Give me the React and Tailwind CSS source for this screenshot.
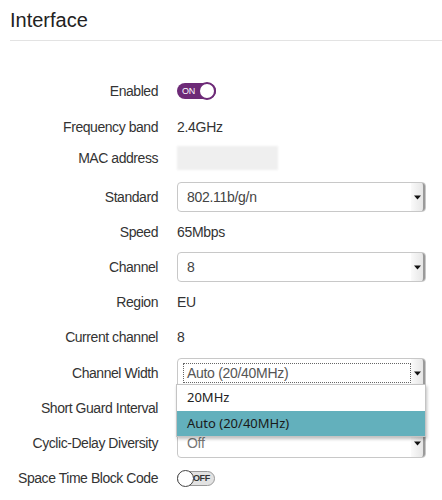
import React from "react";

const Arrow = () => (
  <div className="absolute right-0 top-0 bottom-0 w-[14px] flex items-center justify-center bg-gradient-to-r from-[#fafafa] to-[#e6e6e6] border-r-2 border-[#9a9a9a] rounded-r-[3px]">
    <svg width="7" height="5" viewBox="0 0 7 5"><path d="M0 0.5 L7 0.5 L3.5 4.5 Z" fill="#111" /></svg>
  </div>
);

const Select = ({ value, focus, muted }) => (
  <div className="relative w-[249px] h-[30px] border border-[#c8c8c8] rounded-[4px] bg-white flex items-center">
    {focus ? (
      <div className="ml-[5px] w-[228px] h-[20px] border border-dotted border-[#666] flex items-center pl-[3px] text-[14px] text-[#555]">
        {value}
      </div>
    ) : (
      <span className={`pl-[9px] text-[14px] ${muted ? "text-[#777]" : "text-[#444]"}`}>{value}</span>
    )}
    <Arrow />
  </div>
);

const ToggleOn = () => (
  <div className="relative w-[39px] h-[16px] rounded-full bg-[#6d2a77] flex items-center">
    <span className="pl-[5px] text-[9px] leading-none text-white">ON</span>
    <div className="absolute right-0 top-[-1px] w-[18px] h-[18px] rounded-full bg-white border-2 border-[#6d2a77]" />
  </div>
);

const ToggleOff = () => (
  <div className="relative w-[38px] h-[15px] rounded-full bg-[#e2e2e2] border border-[#999] flex items-center justify-end">
    <span className="pr-[4px] text-[9px] leading-none text-[#333] font-bold">OFF</span>
    <div className="absolute left-[-1px] top-[-2px] w-[17px] h-[17px] rounded-full bg-white border border-[#444]" />
  </div>
);

const Row = ({ label, children, mt }) => (
  <div className={`flex items-center h-[30px] ${mt}`}>
    <div className="w-[158px] text-right text-[14px] text-[#333] shrink-0 tracking-[-0.45px]">{label}</div>
    <div className="ml-[19px] text-[14px] text-[#333] flex items-center tracking-[-0.3px]">{children}</div>
  </div>
);

export default function App() {
  return (
    <div className="w-[442px] h-[500px] bg-white overflow-hidden relative" style={{ fontFamily: '"Liberation Sans", Arial, sans-serif' }}>
      <div className="pl-[10px]">
        <div className="pt-[8px] h-[40px] text-[20px] text-[#222] leading-[24px]">Interface</div>
        <div className="h-px bg-[#e3e3e3]" />
      </div>
      <div className="flex flex-col">
        <Row label="Enabled" mt="mt-[35px]"><ToggleOn /></Row>
        <Row label="Frequency band" mt="mt-[6px]">2.4GHz</Row>
        <Row label="MAC address" mt="mt-[1px]">
          <div className="w-[101px] h-[24px] bg-[#efefef] blur-[1px]" />
        </Row>
        <Row label="Standard" mt="mt-[9px]"><Select value="802.11b/g/n" /></Row>
        <Row label="Speed" mt="mt-[5px]">65Mbps</Row>
        <Row label="Channel" mt="mt-[5px]"><Select value="8" /></Row>
        <Row label="Region" mt="mt-[5px]">EU</Row>
        <Row label="Current channel" mt="mt-[5px]">8</Row>
        <Row label="Channel Width" mt="mt-[6px]">
          <div className="relative">
            <Select value="Auto (20/40MHz)" focus />
            <div className="absolute left-[-1px] top-[26px] w-[250px] bg-white border border-[#c4c4c4] shadow-[1px_2px_3px_rgba(0,0,0,0.25)] z-10 tracking-normal" style={{ fontFamily: '"Noto Sans", "Open Sans", sans-serif' }}>
              <div className="h-[26px] flex items-center pl-[10px] text-[13px] text-[#222]">20MHz</div>
              <div className="h-[25px] flex items-center pl-[10px] text-[13px] text-[#1a1a1a] bg-[#63b0bc]">Auto (20/40MHz)</div>
            </div>
          </div>
        </Row>
        <Row label="Short Guard Interval" mt="mt-[5px]"><Select value="" /></Row>
        <Row label="Cyclic-Delay Diversity" mt="mt-[5px]"><Select value="Off" muted /></Row>
        <Row label="Space Time Block Code" mt="mt-[5px]"><ToggleOff /></Row>
      </div>
    </div>
  );
}
